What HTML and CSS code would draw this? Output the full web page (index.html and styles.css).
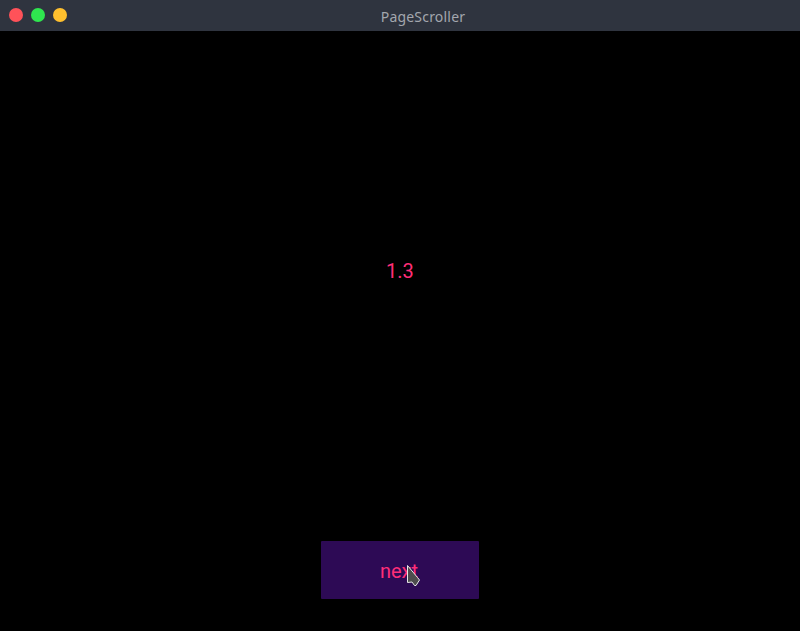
FILE: index.html
```html
<!DOCTYPE html>
<html lang="en">
<head>
  <meta charset="UTF-8">
  <title>PageScroller</title>
  <link rel="stylesheet" href="styles.css">
</head>
<body>

<div id="window">
  <div id="titlebar">
    <div class="lights">
      <div class="light red"></div>
      <div class="light green"></div>
      <div class="light yellow"></div>
    </div>
    <div id="title">PageScroller</div>
  </div>

  <div id="page">
    <div id="page-label">1.3</div>
    <div id="next-button">
      next
      <svg id="cursor" width="15" height="23" viewBox="0 0 15 23">
        <path d="M1.5 1.5 L1.5 18.5 L6 18 L8.5 21.5 L10 21.5 L13.5 16 L11.5 13.5 Z" fill="#4d4d4d" stroke="#e8e8e8" stroke-width="1"/>
      </svg>
    </div>
  </div>
</div>

</body>
</html>
```

FILE: styles.css
```css
body {
  margin: 0;
  background-color: #000;
  font-family: Roboto, sans-serif;
}

#window {
  display: flex;
  flex-direction: column;
  height: 631px;
  overflow: hidden;
}

#titlebar {
  position: relative;
  display: flex;
  align-items: center;
  justify-content: center;
  height: 31px;
  background-color: #2f343f;
}

.lights {
  position: absolute;
  left: 9px;
  top: 8px;
  display: flex;
  gap: 8px;
}

.light {
  width: 14px;
  height: 14px;
  border-radius: 50%;
}

.red {
  background-color: #ff5259;
}

.green {
  background-color: #2fe64f;
}

.yellow {
  background-color: #ffc02e;
}

#title {
  margin-left: 46px;
  margin-top: 2px;
  color: #a3a7ae;
  font-family: "Noto Sans", sans-serif;
  font-size: 14px;
  letter-spacing: 0.2px;
}

#page {
  flex: 1;
  display: flex;
  flex-direction: column;
  align-items: center;
}

#page-label {
  flex: 1;
  display: flex;
  align-items: center;
  padding-bottom: 30px;
  color: #ff2e78;
  font-size: 20px;
}

#next-button {
  position: relative;
  display: flex;
  align-items: center;
  justify-content: center;
  width: 156px;
  height: 56px;
  padding: 2px 2px 0 0;
  margin-bottom: 32px;
  background-color: #2d0a55;
  border-radius: 1px;
  color: #ff2e78;
  font-size: 20px;
}

#cursor {
  position: absolute;
  left: 85px;
  top: 23px;
}
```
